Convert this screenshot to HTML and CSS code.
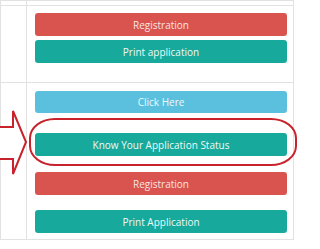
FILE: index.html
```html
<!DOCTYPE html>
<html>
<head>
<meta charset="utf-8">
<link rel="stylesheet" href="styles.css">
</head>
<body>
<div class="page">
  <table class="grid">
    <tr class="row-top"><td class="side"></td><td class="main"></td></tr>
    <tr class="row-a">
      <td class="side"></td>
      <td class="main">
        <div class="stack stack-a">
          <div class="btn red">Registration</div>
          <div class="btn teal">Print application</div>
        </div>
      </td>
    </tr>
    <tr class="row-b">
      <td class="side"></td>
      <td class="main">
        <div class="stack stack-b">
          <div class="btn blue">Click Here</div>
          <div class="btn teal">Know Your Application Status</div>
          <div class="btn red">Registration</div>
          <div class="btn teal">Print Application</div>
        </div>
      </td>
    </tr>
  </table>
  <svg class="arrow" width="30" height="70" viewBox="0 0 30 70">
    <polygon points="-3,17 13,17 13,1 26,32 13,64 13,49 -3,49" fill="#fff" stroke="#c8232c" stroke-width="2" stroke-linejoin="miter"/>
  </svg>
  <div class="ring"></div>
</div>
</body>
</html>
```
FILE: styles.css
```css
html, body {
  margin: 0;
  padding: 0;
  background: #fff;
}
.page {
  position: relative;
  width: 300px;
  height: 249px;
  overflow: hidden;
  font-family: "Open Sans", "Liberation Sans", sans-serif;
}
.grid {
  border-collapse: collapse;
  width: 294px;
}
.grid td {
  border: 1px solid #e2e2e2;
  padding: 0;
  vertical-align: top;
}
.side {
  width: 25px;
}
.row-top td {
  height: 4px;
}
.main {
  padding: 0 6px 0 8px !important;
}
.stack {
  display: flex;
  flex-direction: column;
}
.stack-a {
  padding: 7px 0 19px;
  gap: 4px;
}
.stack-b {
  padding: 8px 0 6px;
}
.stack-b .btn:nth-child(2) { margin-top: 20px; }
.stack-b .btn:nth-child(3) { margin-top: 16px; }
.stack-b .btn:nth-child(4) { margin-top: 15px; }
.btn {
  height: 23px;
  border-radius: 3px;
  display: flex;
  align-items: center;
  justify-content: center;
  font-size: 10px;
  color: #f4f4f4;
}
.red { background: #d9534f; color: #f7e4e3; }
.teal { background: #17a99b; color: #eef9f7; }
.blue { background: #5bc0de; color: #eef8fb; height: 22px; }
.arrow {
  position: absolute;
  left: 0;
  top: 110px;
}
.ring {
  position: absolute;
  left: 29px;
  top: 118px;
  width: 264px;
  height: 44px;
  border: 2px solid #c8232c;
  border-radius: 26px / 20px;
}
```
